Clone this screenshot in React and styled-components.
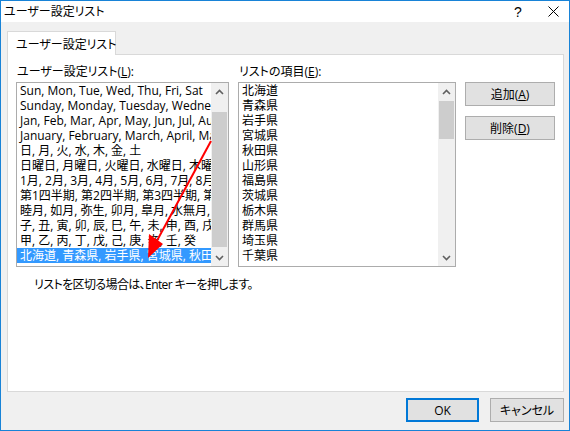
import React from "react";
import styled, { createGlobalStyle } from "styled-components";

const leftItems = [
  "Sun, Mon, Tue, Wed, Thu, Fri, Sat",
  "Sunday, Monday, Tuesday, Wednesday, Thursday, Friday, Saturday",
  "Jan, Feb, Mar, Apr, May, Jun, Jul, Aug, Sep, Oct, Nov, Dec",
  "January, February, March, April, May, June, July",
  "日, 月, 火, 水, 木, 金, 土",
  "日曜日, 月曜日, 火曜日, 水曜日, 木曜日, 金曜日, 土曜日",
  "1月, 2月, 3月, 4月, 5月, 6月, 7月, 8月, 9月",
  "第1四半期, 第2四半期, 第3四半期, 第4四半期",
  "睦月, 如月, 弥生, 卯月, 皐月, 水無月, 文月",
  "子, 丑, 寅, 卯, 辰, 巳, 午, 未, 申, 酉, 戌, 亥",
  "甲, 乙, 丙, 丁, 戊, 己, 庚, 辛, 壬, 癸",
  "北海道, 青森県, 岩手県, 宮城県, 秋田県, 山形県",
];

const rightItems = [
  "北海道",
  "青森県",
  "岩手県",
  "宮城県",
  "秋田県",
  "山形県",
  "福島県",
  "茨城県",
  "栃木県",
  "群馬県",
  "埼玉県",
  "千葉県",
];

const GlobalStyle = createGlobalStyle`
  html, body {
    margin: 0;
    padding: 0;
    background: #ffffff;
  }
  body {
    font-family: "Open Sans", "Noto Sans CJK JP", sans-serif;
    font-feature-settings: "palt";
    font-size: 12px;
    color: #000;
  }
`;

const Chevron = ({ down }) => (
  <svg width="9" height="6" viewBox="0 0 9 6">
    <path
      d={down ? "M1 1 L4.5 4.5 L8 1" : "M1 5 L4.5 1.5 L8 5"}
      fill="none"
      stroke="#606060"
      strokeWidth="1.6"
    />
  </svg>
);

export default function App() {
  return (
    <>
      <GlobalStyle />
      <Window>
        <TitleBar>
          <Title>ユーザー設定リスト</Title>
          <TitleButtons>
            <Help>?</Help>
            <Close>
              <svg width="11" height="11" viewBox="0 0 11 11">
                <path d="M0.5 0.5 L10.5 10.5 M10.5 0.5 L0.5 10.5" stroke="#000" strokeWidth="1" />
              </svg>
            </Close>
          </TitleButtons>
        </TitleBar>
        <Body>
          <TabStrip>
            <Tab>ユーザー設定リスト</Tab>
          </TabStrip>
          <Panel>
            <Columns>
              <Column>
                <Label>
                  ユーザー設定リスト(<u>L</u>):
                </Label>
                <ListBox $width={213}>
                  <Items>
                    {leftItems.map((t, i) => (
                      <Item key={i} $selected={i === leftItems.length - 1}>
                        {t}
                      </Item>
                    ))}
                  </Items>
                  <ScrollBar>
                    <ArrowBtn>
                      <Chevron />
                    </ArrowBtn>
                    <Track>
                      <Thumb $top={12} $height={135} />
                    </Track>
                    <ArrowBtn>
                      <Chevron down />
                    </ArrowBtn>
                  </ScrollBar>
                  <Annotation width="213" height="185" viewBox="0 0 213 185">
                    <line x1="195" y1="59" x2="137" y2="166" stroke="#ff0000" strokeWidth="2" />
                    <polygon points="132,176 133,152 147,162" fill="#ff0000" />
                  </Annotation>
                </ListBox>
              </Column>
              <Column>
                <Label>
                  リストの項目(<u>E</u>):
                </Label>
                <ListBox $width={218}>
                  <Items>
                    {rightItems.map((t, i) => (
                      <Item key={i}>{t}</Item>
                    ))}
                  </Items>
                  <ScrollBar>
                    <ArrowBtn>
                      <Chevron />
                    </ArrowBtn>
                    <Track>
                      <Thumb $top={1} $height={38} />
                    </Track>
                    <ArrowBtn>
                      <Chevron down />
                    </ArrowBtn>
                  </ScrollBar>
                </ListBox>
              </Column>
              <SideButtons>
                <Button $w={90}>
                  追加(<u>A</u>)
                </Button>
                <Button $w={90}>
                  削除(<u>D</u>)
                </Button>
              </SideButtons>
            </Columns>
            <Note>リストを区切る場合は、Enter キーを押します。</Note>
          </Panel>
          <Footer>
            <Button $w={73} $default>
              OK
            </Button>
            <Button $w={74}>キャンセル</Button>
          </Footer>
        </Body>
      </Window>
    </>
  );
}

const Window = styled.div`
  width: 570px;
  height: 431px;
  box-sizing: border-box;
  border: 1px solid #1883d7;
  display: flex;
  flex-direction: column;
  background: #f0f0f0;
`;

const TitleBar = styled.div`
  height: 21px;
  background: #ffffff;
  display: flex;
  align-items: center;
  justify-content: space-between;
  padding-left: 3px;
`;

const Title = styled.div`
  font-size: 12px;
  line-height: 15px;
`;

const TitleButtons = styled.div`
  display: flex;
  align-items: center;
`;

const Help = styled.span`
  width: 40px;
  text-align: center;
  font-family: "Liberation Sans", sans-serif;
  font-size: 14px;
`;

const Close = styled.span`
  width: 30px;
  display: flex;
  justify-content: center;
  padding-right: 1px;
`;

const Body = styled.div`
  flex: 1;
  display: flex;
  flex-direction: column;
  padding: 9px 5px 0 6px;
`;

const TabStrip = styled.div`
  display: flex;
`;

const Tab = styled.div`
  position: relative;
  z-index: 1;
  margin-bottom: -1px;
  height: 24px;
  box-sizing: border-box;
  width: 109px;
  padding-left: 8px;
  display: flex;
  align-items: center;
  white-space: nowrap;
  background: #ffffff;
  border: 1px solid #d9d9d9;
  border-bottom: none;
  font-size: 12px;
`;

const Panel = styled.div`
  height: 338px;
  box-sizing: border-box;
  background: #ffffff;
  border: 1px solid #d9d9d9;
  padding: 9px 8px 0 8px;
`;

const Columns = styled.div`
  display: flex;
  gap: 9px;
  align-items: flex-start;
`;

const Column = styled.div`
  display: flex;
  flex-direction: column;
`;

const Label = styled.div`
  line-height: 15px;
  padding-left: 1px;
  margin-bottom: 3px;
  white-space: nowrap;
  u {
    text-decoration: underline;
  }
`;

const ListBox = styled.div`
  position: relative;
  width: ${(p) => p.$width}px;
  height: 185px;
  box-sizing: border-box;
  border: 1px solid #acacac;
  background: #ffffff;
  display: flex;
  overflow: hidden;
`;

const Items = styled.div`
  flex: 1;
  min-width: 0;
  overflow: hidden;
`;

const Item = styled.div`
  height: 15px;
  line-height: 15px;
  padding-left: 3px;
  white-space: nowrap;
  overflow: hidden;
  background: ${(p) => (p.$selected ? "#3399ff" : "transparent")};
  color: ${(p) => (p.$selected ? "#ffffff" : "#000000")};
`;

const ScrollBar = styled.div`
  width: 17px;
  flex-shrink: 0;
  background: #f0f0f0;
  display: flex;
  flex-direction: column;
`;

const ArrowBtn = styled.div`
  height: 17px;
  display: flex;
  align-items: center;
  justify-content: center;
`;

const Track = styled.div`
  flex: 1;
  position: relative;
`;

const Thumb = styled.div`
  position: absolute;
  left: 1px;
  right: 1px;
  top: ${(p) => p.$top}px;
  height: ${(p) => p.$height}px;
  background: #cdcdcd;
`;

const Annotation = styled.svg`
  position: absolute;
  left: -1px;
  top: -1px;
  pointer-events: none;
`;

const SideButtons = styled.div`
  display: flex;
  flex-direction: column;
  gap: 10px;
  padding-top: 18px;
`;

const Button = styled.div`
  width: ${(p) => p.$w}px;
  height: 24px;
  box-sizing: border-box;
  background: #e1e1e1;
  border: ${(p) => (p.$default ? "2px solid #0078d7" : "1px solid #adadad")};
  display: flex;
  align-items: center;
  justify-content: center;
  white-space: nowrap;
  font-size: 12px;
`;

const Note = styled.div`
  line-height: 15px;
  margin-top: 10px;
  padding-left: 18px;
  letter-spacing: -0.6px;
`;

const Footer = styled.div`
  display: flex;
  justify-content: flex-end;
  gap: 11px;
  padding-top: 6px;
`;
